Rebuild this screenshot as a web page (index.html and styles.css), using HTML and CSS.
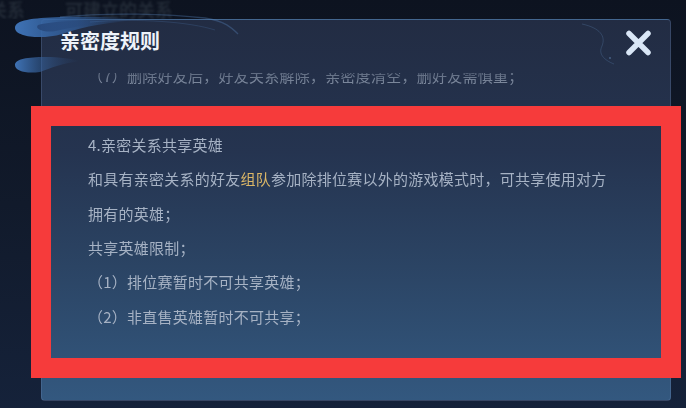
FILE: index.html
```html
<!DOCTYPE html>
<html lang="zh-CN">
<head>
  <meta charset="UTF-8">
  <meta name="viewport" content="width=device-width, initial-scale=1.0">
  <title>亲密度规则</title>
  <link rel="stylesheet" href="styles.css">
</head>
<body>
  <div class="screen">
    <div class="tabs">
      <span class="tab tab-cut">关系</span>
      <span class="tab">可建立的关系</span>
    </div>

    <div class="dialog">
      <div class="dialog-head">
        <h1 class="dialog-title">亲密度规则</h1>
        <svg class="close" width="27" height="26" viewBox="0 0 27 26">
          <path d="M4 3.5 L23 22.5 M23 3.5 L4 22.5" stroke="#d9e6f6" stroke-width="5.5" stroke-linecap="round" fill="none"/>
        </svg>
      </div>

      <div class="rules">
        <div class="rules-list">
          <p>（7）删除好友后，好友关系解除，亲密度清空，删好友需慎重；</p>
          <div class="rule">
            <p>4.亲密关系共享英雄</p>
            <p>和具有亲密关系的好友<span class="gold">组队</span>参加除排位赛以外的游戏模式时，可共享使用对方拥有的英雄；</p>
            <p>共享英雄限制；</p>
            <p>（1）排位赛暂时不可共享英雄；</p>
            <p>（2）非直售英雄暂时不可共享；</p>
          </div>
        </div>
      </div>
    </div>

    <!-- 装饰云纹 -->
    <svg class="swirl" width="260" height="80" viewBox="0 0 260 80">
      <defs>
        <linearGradient id="cloudA" x1="0" y1="0" x2="1" y2="0">
          <stop offset="0" stop-color="#3f73b6"/>
          <stop offset="0.5" stop-color="#305c98" stop-opacity="0.75"/>
          <stop offset="1" stop-color="#2a4a78" stop-opacity="0"/>
        </linearGradient>
        <linearGradient id="cloudIn" x1="0" y1="0" x2="1" y2="0">
          <stop offset="0" stop-color="#27477a" stop-opacity="0.9"/>
          <stop offset="1" stop-color="#27477a" stop-opacity="0"/>
        </linearGradient>
        <linearGradient id="cloudB" x1="0" y1="0" x2="1" y2="0">
          <stop offset="0" stop-color="#3f73b6"/>
          <stop offset="1" stop-color="#2a4a78" stop-opacity="0"/>
        </linearGradient>
      </defs>
      <path d="M15 28 C15 20 32 18 60 17 C92 16 122 17 138 20 C112 22 84 26 62 34 C42 40 15 37 15 28 Z" fill="url(#cloudA)"/>
      <path d="M38 25 C50 21 80 20 110 21 C90 24 70 28 56 31 C44 33 34 29 38 25 Z" fill="url(#cloudIn)"/>
      <path d="M60 17 C110 12 170 14 205 18 C225 21 232 28 238 34" stroke="#5a86c0" stroke-opacity="0.35" stroke-width="1.3" fill="none"/>
      <path d="M90 22 C140 18 190 22 215 30" stroke="#4d78b0" stroke-opacity="0.25" stroke-width="1" fill="none"/>
      <path d="M15 65 C15 59 28 57 45 57 C60 57 72 59 80 61 C64 63 50 68 40 72 C26 74 15 71 15 65 Z" fill="url(#cloudB)"/>
    </svg>
    <svg class="swirl-right" width="40" height="50" viewBox="0 0 40 50">
      <path d="M2 4 C20 8 26 16 22 26 C18 34 24 40 34 44" stroke="#5a80b0" stroke-opacity="0.3" stroke-width="1" fill="none"/>
      <circle cx="30" cy="38" r="1" fill="#6b90c0" fill-opacity="0.5"/>
    </svg>

    <div class="highlight"></div>
  </div>
</body>
</html>
```

FILE: styles.css
```css
body {
  margin: 0;
  font-family: 'Noto Sans CJK SC', 'Noto Sans', sans-serif;
  background-color: #0e1522;
}
.screen {
  position: relative;
  width: 686px;
  height: 408px;
  overflow: hidden;
  background: linear-gradient(180deg, #0d1320 0%, #111a2b 50%, #15223a 100%);
}
.tabs {
  display: flex;
  gap: 40px;
  height: 19px;
  overflow: hidden;
}
.tab {
  color: #222a36;
  font-size: 18px;
  line-height: 18px;
  font-weight: 700;
  filter: blur(1px);
}
.tab-cut {
  margin-left: -11px;
}
.dialog {
  margin-left: 41px;
  width: 630px;
  height: 382px;
  box-sizing: border-box;
  border: 1px solid rgba(110, 140, 185, 0.28);
  border-radius: 4px;
  background: linear-gradient(180deg, #222c43 0%, #253450 35%, #2b4464 65%, #33587f 100%);
  overflow: hidden;
}
.dialog-head {
  display: flex;
  justify-content: space-between;
  align-items: flex-start;
  box-sizing: border-box;
  height: 53px;
  padding: 11px 18px 0 18px;
}
.dialog-title {
  margin: 0;
  color: #eef3fa;
  font-size: 20px;
  line-height: 20px;
  font-weight: 700;
}
.close {
  display: block;
  margin-top: -1px;
}
.rules {
  height: 328px;
  overflow: hidden;
  padding: 0 56px 0 46px;
  -webkit-mask-image: linear-gradient(180deg, rgba(0, 0, 0, 0.45) 0, #000 24px);
  mask-image: linear-gradient(180deg, rgba(0, 0, 0, 0.45) 0, #000 24px);
}
.rules-list {
  margin-top: -14px;
  color: #a6b2c4;
  font-size: 15px;
  letter-spacing: 0.25px;
  line-height: 34.4px;
}
.rules-list p {
  margin: 0;
}
.rule {
  margin-top: 34.4px;
}
.gold {
  color: #dcb767;
}
.swirl {
  position: absolute;
  left: 0;
  top: 0;
  pointer-events: none;
}
.swirl-right {
  position: absolute;
  left: 580px;
  top: 20px;
  pointer-events: none;
}
.highlight {
  position: absolute;
  left: 31px;
  top: 106px;
  width: 650px;
  height: 272px;
  box-sizing: border-box;
  border: 20px solid #f63b3b;
}
```
